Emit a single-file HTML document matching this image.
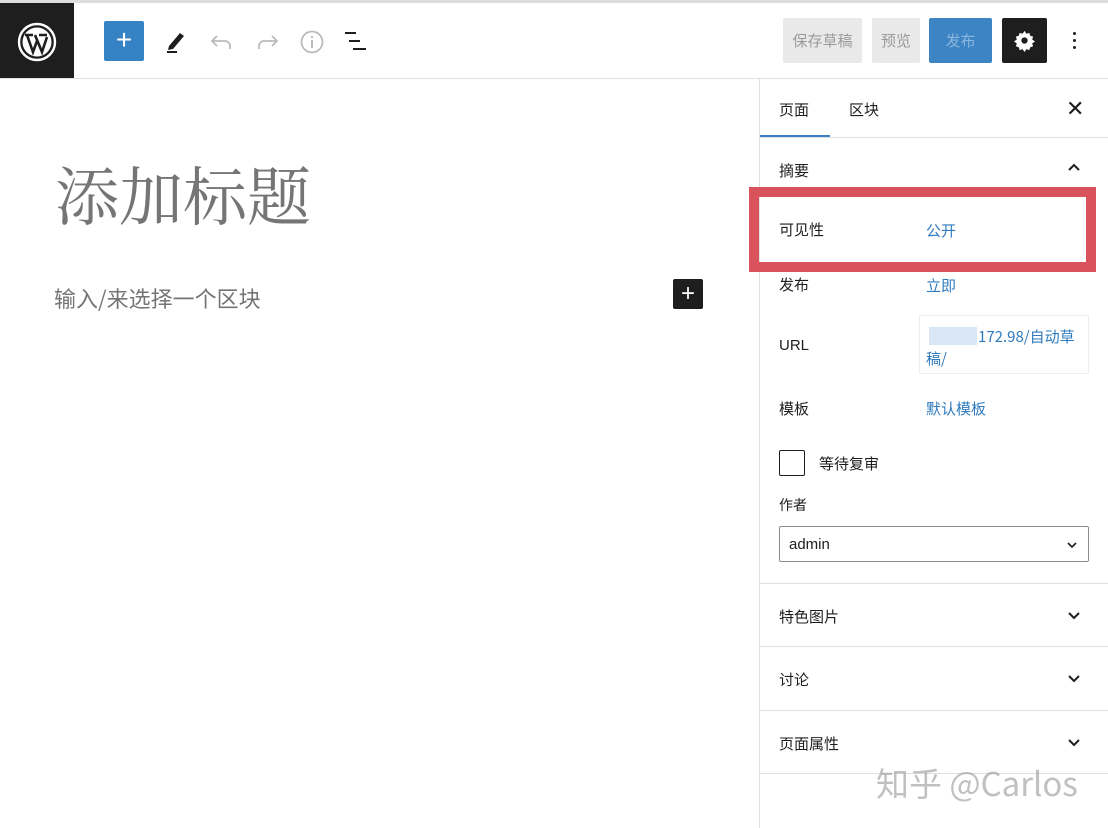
<!DOCTYPE html>
<html><head><meta charset="utf-8"><style>
*{box-sizing:border-box;margin:0;padding:0}
body{width:1108px;height:828px;overflow:hidden;background:#fff;font-family:"Liberation Sans","Noto Sans CJK SC",sans-serif;color:#1e1e1e;position:relative}
.abs{position:absolute}
.cjk{font-family:"Noto Sans CJK SC",sans-serif}
.lbl{font-size:15px;color:#1e1e1e}
.lnk{font-size:15px;color:#2f7bbd}
.hr{position:absolute;left:760px;width:348px;height:1px;background:#e0e0e0}
</style></head><body>
<div class="abs" style="left:0;top:0;width:1108px;height:3px;background:#ddd"></div>
<div class="abs" style="left:0;top:3px;width:74px;height:75px;background:#1e1e1e"></div>
<svg class="abs" style="left:17px;top:22px" width="40" height="40" viewBox="0 0 40 40"><circle cx="20" cy="20" r="18" fill="none" stroke="#fff" stroke-width="2.4"/><circle cx="20" cy="20" r="14.5" fill="#fff"/><path d="M8 13h8M22 13h8M10 13l6 17 4-11M18 13l7 17 5-15" stroke="#1e1e1e" stroke-width="2.6" fill="none"/></svg>
<div class="abs" style="left:0;top:78px;width:1108px;height:1px;background:#e0e0e0"></div>
<div class="abs" style="left:104px;top:21px;width:40px;height:40px;background:#3582c4;border-radius:2px;color:#fff;font-size:28px;line-height:38px;text-align:center">+</div>
<svg class="abs" style="left:162px;top:26px" width="28" height="30" viewBox="0 0 28 30"><path d="M7 20l11-13 4 3-11 13-5 1z" fill="#1e1e1e"/><rect x="5" y="25" width="10" height="2" fill="#1e1e1e"/></svg>
<svg class="abs" style="left:208px;top:30px" width="28" height="22" viewBox="0 0 28 22"><path d="M9 6L4 11l5 5M4 11h13a5 5 0 0 1 5 5v3" stroke="#bbb" stroke-width="1.8" fill="none"/></svg>
<svg class="abs" style="left:253px;top:30px" width="28" height="22" viewBox="0 0 28 22"><path d="M19 6l5 5-5 5M24 11H11a5 5 0 0 0-5 5v3" stroke="#bbb" stroke-width="1.8" fill="none"/></svg>
<svg class="abs" style="left:299px;top:29px" width="26" height="26" viewBox="0 0 26 26"><circle cx="13" cy="13" r="10.5" fill="none" stroke="#bbb" stroke-width="1.8"/><rect x="12" y="11" width="2" height="8" fill="#bbb"/><rect x="12" y="7" width="2" height="2" fill="#bbb"/></svg>
<svg class="abs" style="left:343px;top:30px" width="26" height="22" viewBox="0 0 26 22"><rect x="2" y="2" width="11" height="2" fill="#1e1e1e"/><rect x="6" y="10" width="11" height="2" fill="#1e1e1e"/><rect x="10" y="18" width="13" height="2" fill="#1e1e1e"/></svg>
<div class="abs cjk" style="left:783px;top:18px;width:79px;height:45px;background:#e9e9e9;border-radius:2px;color:#9a9a9a;font-size:15px;line-height:45px;text-align:center">保存草稿</div>
<div class="abs cjk" style="left:872px;top:18px;width:48px;height:45px;background:#e9e9e9;border-radius:2px;color:#9a9a9a;font-size:15px;line-height:45px;text-align:center">预览</div>
<div class="abs cjk" style="left:929px;top:18px;width:63px;height:45px;background:#3d84c4;border-radius:2px;color:#8bb6dd;font-size:15px;line-height:45px;text-align:center">发布</div>
<div class="abs" style="left:1002px;top:18px;width:45px;height:45px;background:#1e1e1e;border-radius:2px"></div>
<svg class="abs" style="left:1013px;top:29px" width="23" height="23" viewBox="0 0 24 24"><path d="M12 2l2 3 3-1 1 3 3 1-1 3 3 2-3 2 1 3-3 1-1 3-3-1-2 3-2-3-3 1-1-3-3-1 1-3-3-2 3-2-1-3 3-1 1-3 3 1z" fill="#fff"/><circle cx="12" cy="12" r="3.3" fill="#1e1e1e"/></svg>
<div class="abs" style="left:1073px;top:32px;width:3px;height:3px;background:#1e1e1e;border-radius:50%;box-shadow:0 7px 0 #1e1e1e,0 14px 0 #1e1e1e"></div>
<div class="abs" style="left:759px;top:79px;width:1px;height:749px;background:#e0e0e0"></div>
<div class="abs cjk" style="left:55px;top:150px;font-family:'Noto Serif CJK SC',serif;font-size:64px;color:#757575;line-height:86px">添加标题</div>
<div class="abs cjk" style="left:54px;top:282px;font-size:22px;color:#757575">输入/来选择一个区块</div>
<div class="abs" style="left:673px;top:279px;width:30px;height:30px;background:#1e1e1e;border-radius:2px;color:#fff;font-size:24px;line-height:29px;text-align:center">+</div>
<div class="abs cjk lbl" style="left:779px;top:99px">页面</div>
<div class="abs cjk lbl" style="left:849px;top:99px">区块</div>
<div class="abs" style="left:760px;top:135px;width:70px;height:3px;background:#3582c4"></div>
<div class="abs" style="left:1066px;top:96px;font-size:22px">✕</div>
<div class="hr" style="top:137px"></div>
<div class="abs cjk lbl" style="left:779px;top:160px">摘要</div>
<svg class="abs" style="left:1066px;top:161px" width="16" height="12"><path d="M3 9l5-5 5 5" stroke="#1e1e1e" stroke-width="2" fill="none"/></svg>
<div class="abs" style="left:749px;top:187px;width:347px;height:85px;border:10px solid #d9535d"></div>
<div class="abs cjk lbl" style="left:779px;top:219px">可见性</div>
<div class="abs cjk lnk" style="left:926px;top:220px">公开</div>
<div class="abs cjk lbl" style="left:779px;top:274px">发布</div>
<div class="abs cjk lnk" style="left:926px;top:275px">立即</div>
<div class="abs" style="left:919px;top:315px;width:170px;height:59px;border:1px solid #eee"></div>
<div class="abs" style="left:929px;top:327px;width:48px;height:18px;background:#d8e6f5"></div>
<div class="abs lbl" style="left:779px;top:337px">URL</div>
<div class="abs cjk lnk" style="left:926px;top:326px;width:160px;line-height:22px"><span style="margin-left:52px">172.98/自动草</span><br>稿/</div>
<div class="abs cjk lbl" style="left:779px;top:398px">模板</div>
<div class="abs cjk lnk" style="left:926px;top:398px">默认模板</div>
<div class="abs" style="left:779px;top:450px;width:26px;height:26px;border:1.5px solid #1e1e1e;border-radius:2px"></div>
<div class="abs cjk lbl" style="left:819px;top:453px">等待复审</div>
<div class="abs cjk" style="left:779px;top:495px;font-size:14px">作者</div>
<div class="abs" style="left:779px;top:526px;width:310px;height:36px;border:1px solid #8c8c8c;border-radius:2px"></div>
<div class="abs lbl" style="left:789px;top:536px">admin</div>
<svg class="abs" style="left:1066px;top:540px" width="12" height="10"><path d="M2 3l4 4 4-4" stroke="#1e1e1e" stroke-width="1.6" fill="none"/></svg>
<div class="hr" style="top:583px"></div>
<div class="abs cjk lbl" style="left:779px;top:606px">特色图片</div>
<div class="hr" style="top:646px"></div>
<div class="abs cjk lbl" style="left:779px;top:669px">讨论</div>
<div class="hr" style="top:710px"></div>
<div class="abs cjk lbl" style="left:779px;top:733px">页面属性</div>
<div class="hr" style="top:773px"></div>
<svg class="abs" style="left:1066px;top:610px" width="16" height="160"><path d="M3 3l5 5 5-5M3 66l5 5 5-5M3 130l5 5 5-5" stroke="#1e1e1e" stroke-width="2" fill="none"/></svg>
<div class="abs cjk" style="left:876px;top:758px;font-size:33px;color:rgba(150,150,150,0.6)">知乎 @Carlos</div>
</body></html>
